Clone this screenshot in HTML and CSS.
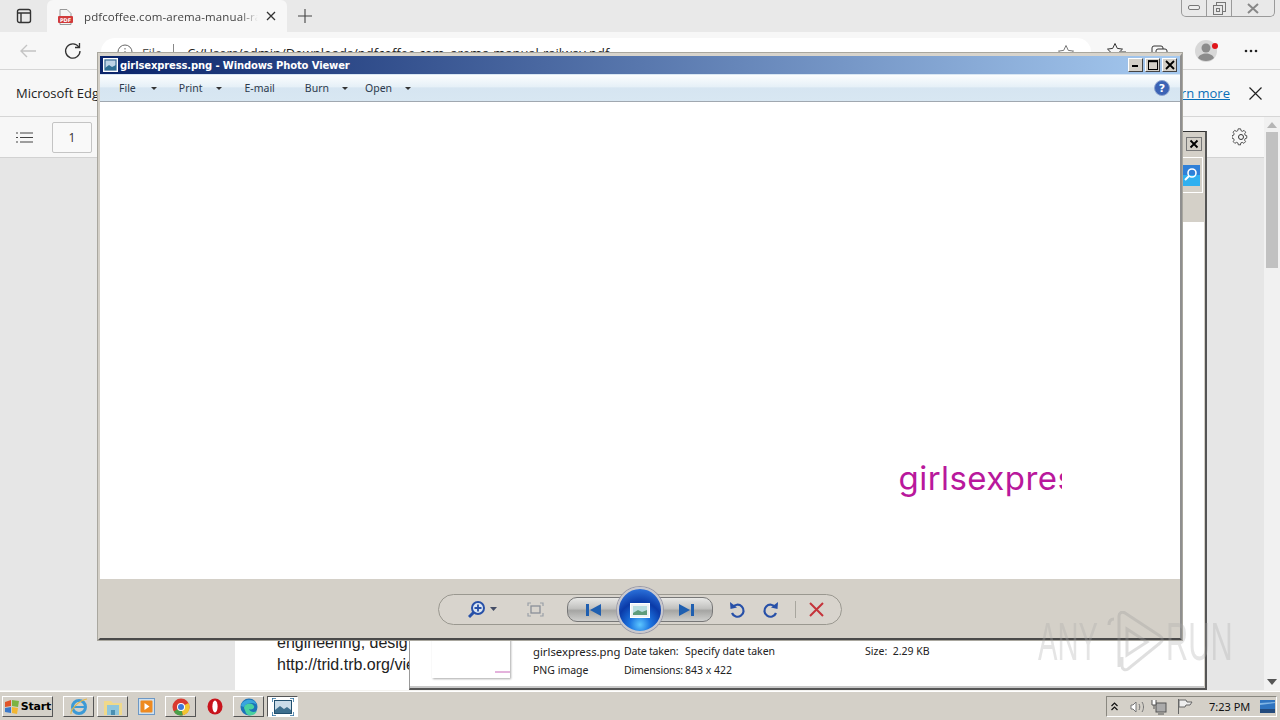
FILE: index.html
```html
<!DOCTYPE html>
<html lang="en">
<head>
<meta charset="utf-8">
<title>Windows Photo Viewer</title>
<link rel="stylesheet" href="styles.css">
</head>
<body>
<div class="desktop">
  <div class="browser">
    <div class="tabstrip">
      <svg class="tab-actions" width="16" height="16" viewBox="0 0 16 16"><rect x="1.5" y="1.5" width="13" height="13" rx="2" fill="none" stroke="#333" stroke-width="1.4"/><path d="M1.5 5h13M5 5v9.5" stroke="#333" stroke-width="1.4" fill="#666"/></svg>
      <div class="tab">
        <svg class="pdf-icon" width="15" height="16" viewBox="0 0 15 16"><path d="M2 .5h7l4 4v11H2z" fill="#f4f4f4" stroke="#999" stroke-width="1"/><rect x="0" y="7" width="15" height="7" rx="1" fill="#d13b3b"/><text x="7.5" y="12.6" text-anchor="middle" class="pdf-label">PDF</text></svg>
        <span class="tab-title">pdfcoffee.com-arema-manual-railway</span>
        <svg class="tab-close" width="10" height="10" viewBox="0 0 10 10"><path d="M1 1l8 8M9 1l-8 8" stroke="#333" stroke-width="1.3"/></svg>
      </div>
      <svg class="new-tab" width="16" height="16" viewBox="0 0 16 16"><path d="M8 1v14M1 8h14" stroke="#444" stroke-width="1.1"/></svg>
      <div class="caption">
        <span class="cap-btn"><svg width="12" height="6" viewBox="0 0 12 6"><rect x=".5" y=".5" width="11" height="4" rx="1.5" fill="#eee" stroke="#777"/></svg></span>
        <span class="cap-btn"><svg width="13" height="13" viewBox="0 0 13 13"><rect x="3.5" y=".5" width="9" height="9" fill="none" stroke="#777"/><rect x=".5" y="3.5" width="9" height="9" fill="#e8e8e8" stroke="#777"/><rect x="3.5" y="6.5" width="3" height="3" fill="none" stroke="#777"/></svg></span>
        <span class="cap-btn cap-wide"><svg width="12" height="11" viewBox="0 0 12 11"><path d="M1 1l10 9M11 1L1 10" stroke="#888" stroke-width="2"/></svg></span>
      </div>
    </div>
    <div class="toolbar">
      <svg class="nav-back" width="18" height="14" viewBox="0 0 18 14"><path d="M17 7H2M8 1L2 7l6 6" fill="none" stroke="#c4c4c4" stroke-width="1.4"/></svg>
      <svg class="nav-reload" width="18" height="18" viewBox="0 0 18 18"><path d="M14.8 5A7.2 7.2 0 1 0 16 9" fill="none" stroke="#333" stroke-width="1.3"/><path d="M15.5 1v4.5H11" fill="none" stroke="#333" stroke-width="1.3"/></svg>
      <div class="address">
        <svg class="info" width="16" height="16" viewBox="0 0 16 16"><circle cx="8" cy="8" r="7" fill="none" stroke="#666"/><path d="M8 7v5M8 4v1.5" stroke="#666"/></svg>
        <span class="addr-file">File</span>
        <span class="addr-sep"></span>
        <span class="addr-url">C:/Users/admin/Downloads/pdfcoffee.com_arema-manual-railway.pdf</span>
        <svg class="addr-star" width="18" height="18" viewBox="0 0 18 18"><path d="M9 1.5l2.3 4.9 5.2.7-3.8 3.7.9 5.3L9 13.5l-4.6 2.6.9-5.3L1.500 7.100l5.200-.7z" fill="none" stroke="#777"/></svg>
      </div>
      <svg class="tool-fav" width="20" height="18" viewBox="0 0 20 18"><path d="M8 1.500l2.300 4.900 5.200.7-3.800 3.700.9 5.300L8 13.500l-4.600 2.600.9-5.300L.500 7.100l5.200-.7zM14 10h5M14 13h5" fill="none" stroke="#333"/></svg>
      <svg class="tool-coll" width="18" height="18" viewBox="0 0 18 18"><rect x="1" y="3" width="11" height="11" rx="2" fill="none" stroke="#333"/><rect x="5" y="6" width="11" height="11" rx="2" fill="#f7f7f7" stroke="#333"/></svg>
      <svg class="tool-avatar" width="24" height="24" viewBox="0 0 24 24"><circle cx="11" cy="12" r="11" fill="#d8d8d8"/><circle cx="11" cy="9" r="4.500" fill="#8c8c8c"/><path d="M3 19c2-6 14-6 16 0-4 4-12 4-16 0z" fill="#8c8c8c"/><circle cx="20" cy="7" r="3" fill="#e0161b"/></svg>
      <svg class="tool-more" width="14" height="4" viewBox="0 0 14 4"><circle cx="2" cy="2" r="1.300" fill="#222"/><circle cx="7" cy="2" r="1.300" fill="#222"/><circle cx="12" cy="2" r="1.300" fill="#222"/></svg>
    </div>
    <div class="infobar">
      <span class="info-text">Microsoft Edge</span>
      <a class="learn">Learn more</a>
      <svg class="info-close" width="13" height="13" viewBox="0 0 13 13"><path d="M.5.500l12 12M12.500.500l-12 12" stroke="#222" stroke-width="1.200"/></svg>
    </div>
    <div class="lower">
      <div class="pdf">
        <div class="pdf-bar">
          <svg class="toc" width="17" height="11" viewBox="0 0 17 11"><path d="M4 1h13M4 5.500h13M4 10h13M0 1h2M0 5.500h2M0 10h2" stroke="#444" stroke-width="1.100"/></svg>
          <span class="page-box">1</span>
          <svg class="gear" width="18" height="18" viewBox="0 0 18 18"><path d="M7.500 1h3l.5 2.300 1.700.8 2-1.200 2 2.200-1.300 2 .6 1.700 2 .6v3l-2 .6-.7 1.700 1.200 2-2 2-2-1.200-1.700.7-.5 2.300" transform="scale(.82)" fill="none" stroke="#333"/><path d="M7.500 1 7 3.300l-1.700.8-2-1.200-2 2.200 1.300 2-.6 1.700-2 .6v3l2 .6.700 1.700-1.200 2 2 2 2-1.200 1.700.7.500 2.300h3" transform="scale(.82)" fill="none" stroke="#333"/><circle cx="9" cy="9" r="2.500" fill="none" stroke="#333"/></svg>
        </div>
        <div class="viewer">
          <div class="pdf-page">
            <p class="pdf-line">engineering, desig</p>
            <p class="pdf-line">http://trid.trb.org/vie</p>
          </div>
        </div>
      </div>
      <div class="scrollbar">
        <svg width="10" height="6" viewBox="0 0 10 6"><path d="M5 0l5 6H0z" fill="#b5b5b5"/></svg>
        <div class="thumb"></div>
        <svg class="scroll-down" width="10" height="6" viewBox="0 0 10 6"><path d="M5 6l5-6H0z" fill="#555"/></svg>
      </div>
    </div>
  </div>
  <div class="taskbar">
    <button class="task-btn start">
      <svg width="16" height="15" viewBox="0 0 16 15"><path d="M1 3l6-2v6l-6 1z" fill="#e0552a"/><path d="M8 1l7 1-1 6-6-1z" fill="#7cb342"/><path d="M1 9l6-1v6l-6-1z" fill="#3a78c9"/><path d="M8 8l6 1-1 6-5-1z" fill="#f2b632"/></svg>
      <span>Start</span>
    </button>
    <button class="task-btn first">
      <svg width="20" height="20" viewBox="0 0 20 20"><circle cx="10" cy="10" r="6.500" fill="none" stroke="#3d9ad6" stroke-width="3"/><path d="M5 10h11" stroke="#3d9ad6" stroke-width="2"/><path d="M2 17C1 13 10 3 18 2" fill="none" stroke="#e3b64a" stroke-width="1.200"/></svg>
    </button>
    <button class="task-btn">
      <svg width="20" height="18" viewBox="0 0 20 18"><path d="M1 3h7l2 2h9v12H1z" fill="#f0d98a"/><rect x="4" y="7" width="12" height="10" fill="#8fc6dc"/><rect x="8" y="12" width="4" height="5" fill="#4a8fb2"/></svg>
    </button>
    <span class="task-flat media">
      <svg width="17" height="17" viewBox="0 0 17 17"><rect x=".5" y=".5" width="16" height="16" fill="#cfe0ee" stroke="#6d98c5"/><rect x="2.500" y="2.500" width="12" height="12" rx="1" fill="#ee8a20"/><path d="M6.500 5l5 3.500-5 3.500z" fill="#fff"/></svg>
    </span>
    <button class="task-btn">
      <svg width="18" height="18" viewBox="0 0 18 18"><circle cx="9" cy="9" r="8.500" fill="#d93a30"/><path d="M9 9L1.800 13.500A8.500 8.500 0 0 0 11 17.300z" fill="#4aa04a"/><path d="M9 9l2 8.300A8.500 8.500 0 0 0 16.500 4.900z" fill="#f2c530"/><circle cx="9" cy="9" r="4" fill="#fff"/><circle cx="9" cy="9" r="3" fill="#3f78d8"/></svg>
    </button>
    <span class="task-flat opera">
      <svg width="16" height="17" viewBox="0 0 16 17"><ellipse cx="8" cy="8.500" rx="7.500" ry="8" fill="#c8141c"/><ellipse cx="8" cy="8.500" rx="2.600" ry="6" fill="#fff"/></svg>
    </span>
    <button class="task-btn">
      <svg width="18" height="18" viewBox="0 0 18 18"><circle cx="9" cy="9" r="8.500" fill="#1c73b8"/><path d="M4 10c0-5 8-6 10-2 1 3-3 4-5 3 1 3 5 4 8 2-2 5-9 6-11 2z" fill="#48d0a0"/><path d="M1 8c1-7 13-9 16-1-3-3-11-3-13 2z" fill="#39a5dd"/></svg>
    </button>
    <span class="task-pressed">
      <svg width="22" height="18" viewBox="0 0 22 18"><rect x="2.500" y="2.500" width="17" height="13" fill="#c9dbe8" stroke="#22506f" stroke-width="1"/><path d="M3 12l5-4 4 3 3-2 4 3v3H3z" fill="#3e6f8e"/><path d="M0 4V0h4M18 0h4v4M22 14v4h-4M4 18H0v-4" fill="none" stroke="#2d6f9e" stroke-width="1.500"/></svg>
    </span>
    <div class="tray">
      <svg width="7" height="9" viewBox="0 0 7 9"><path d="M.5 4l3-3 3 3M.5 8l3-3 3 3" fill="none" stroke="#111" stroke-width="1.200"/></svg>
      <svg class="tray-sound" width="16" height="14" viewBox="0 0 16 14"><path d="M1 5h2l3-3v10l-3-3H1z" fill="#fff" stroke="#777"/><path d="M9 4c1 2 1 4 0 6M12 2c2 3 2 7 0 10" fill="none" stroke="#777"/></svg>
      <svg class="tray-net" width="16" height="16" viewBox="0 0 16 16"><rect x="5" y="4" width="10" height="9" fill="#aaa" stroke="#555"/><path d="M1 1v5h4V1M3 6v4" fill="#fff" stroke="#555"/><path d="M7 15h6" stroke="#555"/></svg>
      <svg class="tray-flag" width="16" height="15" viewBox="0 0 16 15"><path d="M1.500 0v15M2 1h7l1 2h5l-2 3 0 0H9L8 8H2z" fill="#eee" stroke="#666"/></svg>
      <span class="clock">7:23 PM</span>
      <svg class="tray-desk" width="15" height="13" viewBox="0 0 15 13"><rect width="15" height="13" fill="#2f74c0"/><rect y="9" width="15" height="4" fill="#234a7d"/><path d="M0 3l15-1v1L0 5z" fill="#7fb4e4"/></svg>
    </div>
  </div>

  <div class="window back-window">
    <div class="back-top">
      <svg class="back-close" width="16" height="14" viewBox="0 0 16 14"><rect x=".5" y=".5" width="15" height="13" fill="#d4d0c8" stroke="#777"/><path d="M4.500 3.500l7 7M11.500 3.500l-7 7" stroke="#000" stroke-width="1.800"/></svg>
      <div class="back-search">
        <svg width="18" height="21" viewBox="0 0 18 21"><rect width="18" height="21" fill="#2f80d8"/><rect y="10" width="18" height="11" fill="#2fb0f0"/><circle cx="10" cy="8" r="4" fill="none" stroke="#fff" stroke-width="1.600"/><path d="M7 11l-4 4" stroke="#fff" stroke-width="2"/></svg>
      </div>
      <svg class="back-help" width="18" height="18" viewBox="0 0 18 18"><circle cx="3" cy="9" r="7" fill="#3a5fb0" stroke="#97a6c9"/></svg>
    </div>
    <div class="back-white">
      <div class="details">
        <div class="thumbnail"><span class="thumb-mark"></span></div>
        <div class="meta-col name-col"><span class="name-text">girlsexpress.png</span><span>PNG image</span></div>
        <div class="meta-col"><span><span class="meta-label">Date taken:</span>Specify date taken</span><span><span class="meta-label">Dimensions:</span>843 x 422</span></div>
        <div class="meta-col size-col"><span>Size:&nbsp; 2.29 KB</span></div>
      </div>
    </div>
  </div>

  <div class="window photo-window">
    <div class="titlebar">
      <svg width="15" height="14" viewBox="0 0 15 14"><rect x=".5" y=".5" width="14" height="13" fill="#d7e6f2" stroke="#fff"/><rect x="2" y="2" width="11" height="10" fill="#bcd3e6" stroke="#2b5f88"/><path d="M2 10l4-3 3 2 4-2v5H2z" fill="#2f6f94"/></svg>
      <span class="title-text">girlsexpress.png - Windows Photo Viewer</span>
      <div class="win-buttons">
        <span class="win-btn"><svg width="8" height="3" viewBox="0 0 8 3"><rect width="6" height="2" y="1" fill="#000"/></svg></span>
        <span class="win-btn"><svg width="10" height="10" viewBox="0 0 10 10"><rect x=".5" y="1" width="9" height="8.500" fill="none" stroke="#000"/><path d="M0 1.200h10" stroke="#000" stroke-width="2"/></svg></span>
        <span class="win-btn win-close"><svg width="10" height="10" viewBox="0 0 10 10"><path d="M1 1l8 8M9 1L1 9" stroke="#000" stroke-width="1.800"/></svg></span>
      </div>
    </div>
    <div class="menubar">
      <span class="menu m-file">File</span><i class="caret c-file"></i>
      <span class="menu m-print">Print</span><i class="caret c-print"></i>
      <span class="menu m-email">E-mail</span>
      <span class="menu m-burn">Burn</span><i class="caret c-burn"></i>
      <span class="menu m-open">Open</span><i class="caret c-open"></i>
      <svg class="help" width="16" height="16" viewBox="0 0 16 16"><circle cx="8" cy="8" r="7.500" fill="#3c63b5" stroke="#8ea4cf"/><text x="8" y="12" text-anchor="middle" class="help-q">?</text></svg>
    </div>
    <div class="stage">
      <div class="picture"><span class="picture-text">girlsexpress</span></div>
    </div>
    <div class="controls">
      <div class="pill">
        <svg class="c-zoom" width="30" height="20" viewBox="0 0 30 20"><circle cx="10" cy="8" r="6" fill="#dbe6f3" stroke="#2750a8" stroke-width="2"/><path d="M6.500 8h7M10 4.500v7" stroke="#2750a8" stroke-width="1.800"/><path d="M5.500 12.500L1 17" stroke="#2750a8" stroke-width="3"/><path d="M22 7h7l-3.500 4z" fill="#444d66"/></svg>
        <svg class="c-fit" width="17" height="15" viewBox="0 0 17 15"><rect x="4" y="4" width="9" height="7" fill="none" stroke="#8a9098" stroke-width="1.300"/><path d="M1 4V1h3M13 1h3v3M16 11v3h-3M4 14H1v-3" fill="none" stroke="#9aa0a8" stroke-width="1.200"/></svg>
        <div class="nav-group">
          <svg class="nav-first" width="15" height="12" viewBox="0 0 15 12"><rect width="3" height="12" fill="#1f5fb0"/><path d="M15 0v12L4 6z" fill="#1f5fb0"/></svg>
          <span class="slideshow">
            <svg width="20" height="15" viewBox="0 0 20 15"><rect x=".5" y=".5" width="19" height="14" fill="#eef2f6" stroke="#fff"/><rect x="3" y="3" width="14" height="9" fill="#b8dce0"/><path d="M3 10l5-3 4 2 5-2v5H3z" fill="#5f9c7c"/></svg>
          </span>
          <svg class="nav-last" width="15" height="12" viewBox="0 0 15 12"><path d="M0 0v12l11-6z" fill="#1f5fb0"/><rect x="12" width="3" height="12" fill="#1f5fb0"/></svg>
        </div>
        <svg class="c-rot-l" width="16" height="18" viewBox="0 0 16 18"><path d="M3.500 6.500A6 6 0 1 1 3 12" fill="none" stroke="#2750a8" stroke-width="2.200"/><path d="M1 1l.5 7 6.500-1.500z" fill="#2750a8"/></svg>
        <svg class="c-rot-r" width="16" height="18" viewBox="0 0 16 18"><path d="M12.500 6.500A6 6 0 1 0 13 12" fill="none" stroke="#2750a8" stroke-width="2.200"/><path d="M15 1l-.5 7L8 6.500z" fill="#2750a8"/></svg>
        <span class="c-sep"></span>
        <svg class="c-del" width="15" height="15" viewBox="0 0 15 15"><path d="M1 1l13 13M14 1L1 14" stroke="#c5333a" stroke-width="2"/></svg>
      </div>
    </div>
  </div>

  <div class="watermark">
    <span class="wm-any">ANY</span>
    <svg class="wm-logo" width="58" height="62" viewBox="0 0 58 62"><path d="M3 14c0-4 2-6 5-6M13 56L13 5c0-3 3-5 6-3l35 23c3 2 3 5 0 7L22 58c-3 2-6 0-6-3V46M21 18v26l20-13z" fill="none" stroke="#999" stroke-width="3"/></svg>
    <span class="wm-run">RUN</span>
  </div>
</div>
</body>
</html>
```
FILE: styles.css
```css
* { box-sizing: border-box; }
html, body { margin: 0; padding: 0; height: 100%; overflow: hidden; }
body { font-family: "Open Sans", "Noto Sans", sans-serif; background: #e6e6e6; }
svg { display: block; flex: none; }
.desktop { position: relative; width: 1280px; height: 720px; display: flex; flex-direction: column; overflow: hidden; }

/* browser */
.browser { height: 691px; display: flex; flex-direction: column; border-bottom: 1px solid #f4f3f0; }
.tabstrip { height: 32px; background: #e9e9e9; display: flex; align-items: center; padding-left: 16px; }
.tab { margin-left: 15px; width: 240px; height: 32px; background: #f7f7f7; border-radius: 6px 6px 0 0; display: flex; align-items: center; padding: 0 11px 0 11px; }
.pdf-icon { margin-top: 1px; }
.pdf-label { font-family: "DejaVu Sans", sans-serif; font-weight: bold; font-size: 5px; fill: #fff; }
.tab-title { margin-left: 11px; width: 174px; font-size: 11.500px; color: #444; white-space: nowrap; overflow: hidden; letter-spacing: .1px; -webkit-mask-image: linear-gradient(to right, #000 90%, transparent); mask-image: linear-gradient(to right, #000 90%, transparent); }
.tab-close { margin-left: 8px; }
.new-tab { margin-left: 10px; }
.caption { margin-left: auto; margin-right: 5px; align-self: flex-start; height: 17px; display: flex; border: 1px solid #9a9a9a; border-top: 0; border-radius: 0 0 5px 5px; }
.cap-btn { width: 25px; display: flex; align-items: center; justify-content: center; border-right: 1px solid #9a9a9a; }
.cap-wide { width: 42px; border-right: 0; }
.toolbar { height: 38px; background: #f7f7f7; border-bottom: 1px solid #d6d6d6; display: flex; align-items: center; padding-left: 19px; }
.nav-reload { margin-left: 27px; }
.address { margin-left: 19px; width: 990px; height: 32px; margin-top: 6px; background: #fff; border-radius: 14px 14px 0 0; display: flex; align-items: flex-start; padding: 6px 16px 0 16px; position: relative; }
.addr-file { margin-left: 9px; font-size: 12.800px; color: #555; line-height: 18px; }
.addr-sep { margin-left: 11px; width: 1px; height: 17px; background: #888; }
.addr-url { margin-left: 13px; font-size: 12.950px; color: #222; line-height: 18px; white-space: nowrap; }
.addr-star { margin-left: auto; }
.tool-fav { margin-left: 16px; }
.tool-coll { margin-left: 24px; margin-top: 2px; }
.tool-avatar { margin-left: 26px; }
.tool-more { margin-left: 25px; }
.infobar { height: 47px; background: #f7f7f7; border-bottom: 1px solid #d6d6d6; display: flex; align-items: center; padding: 0 18px 0 16px; }
.info-text { font-size: 13px; color: #222; }
.learn { margin-left: auto; font-size: 13px; color: #0b6fb8; text-decoration: underline; }
.info-close { margin-left: 19px; }
.lower { flex: 1; display: flex; min-height: 0; }
.pdf { flex: 1; display: flex; flex-direction: column; }
.pdf-bar { height: 41px; background: #f7f7f7; border-bottom: 1px solid #d2d2d2; display: flex; align-items: center; padding-left: 16px; }
.page-box { margin-left: 19px; width: 40px; height: 31px; background: #f9f9f9; border: 1px solid #c4c4c4; border-radius: 2px; font-size: 12px; color: #333; display: flex; align-items: center; justify-content: center; }
.gear { margin-left: auto; margin-right: 14px; }
.viewer { flex: 1; background: #e6e6e6; padding-left: 235px; overflow: hidden; display: flex; }
.pdf-page { width: 800px; background: #fff; padding: 474px 0 0 42px; font-family: "Liberation Sans", Arial, sans-serif; font-size: 16px; color: #222; }
.pdf-line { margin: 0 0 1px; line-height: 21px; white-space: nowrap; }
.scrollbar { width: 16px; background: #f1f1f1; display: flex; flex-direction: column; align-items: center; padding-top: 5px; }
.thumb { width: 12px; height: 136px; margin-top: 4px; background: #c1c1c1; }
.scroll-down { margin-top: auto; margin-bottom: 5px; }

/* taskbar */
.taskbar { height: 29px; background: #d4d0c8; border-top: 1px solid #fff; display: flex; align-items: flex-start; padding: 4px 3px 0 2px; }
.task-btn { width: 31px; height: 21px; margin: 0 3px 0 0; padding: 0; background: #d4d0c8; border: 1px solid; border-color: #fff #555 #555 #fff; display: flex; align-items: center; justify-content: center; font-family: "DejaVu Sans", sans-serif; }
.start { width: 51px; font-weight: bold; font-size: 11px; color: #000; gap: 1px; margin-right: 10px; letter-spacing: -.2px; }
.task-flat { height: 21px; display: flex; align-items: center; justify-content: center; }
.media { width: 27px; margin: 0 5px 0 2px; }
.opera { width: 31px; margin-right: 3px; }
.task-pressed { width: 31px; height: 21px; background: #fff; border: 1px solid; border-color: #555 #fff #fff #555; display: flex; align-items: center; justify-content: center; }
.tray { margin-left: auto; width: 171px; height: 21px; border: 1px solid; border-color: #8a8880 #fff #fff #8a8880; display: flex; align-items: center; padding-left: 4px; }
.tray-sound { margin-left: 12px; }
.tray-net { margin-left: 5px; }
.tray-flag { margin-left: 10px; }
.clock { margin-left: 16px; font-family: "Noto Sans", sans-serif; font-size: 11px; color: #111; }
.tray-desk { margin-left: auto; margin-right: 1px; }

/* windows: free-floating on the desktop */
.window { position: absolute; }
.back-window { left: 409px; top: 131px; width: 798px; height: 559px; background: #d4d0c8; border-right: 2px solid #555; border-bottom: 2px solid #555; border-left: 1px solid #999; border-top: 1px solid #333; display: flex; flex-direction: column; }
.back-top { height: 90px; position: relative; }
.back-close { position: absolute; right: 3px; top: 5px; }
.back-search { position: absolute; right: 2px; top: 25px; height: 36px; width: 794px; border: 1px solid #fff; border-left: 0; display: flex; justify-content: flex-end; align-items: center; padding-right: 2px; }
.back-help { position: absolute; right: 18px; top: 66px; }
.back-white { flex: 1; background: #fff; margin-right: 1px; display: flex; flex-direction: column; justify-content: flex-end; border-bottom: 2px solid #c8c8c8; }
.details { height: 50px; padding-top: 2px; display: flex; align-items: flex-start; font-size: 10.500px; color: #222; padding-left: 22px; font-family: "Noto Sans", sans-serif; }
.thumbnail { width: 78px; height: 40px; background: #fff; box-shadow: 1px 1px 2px #aaa; position: relative; }
.thumb-mark { position: absolute; right: 0; top: 33px; width: 15px; height: 2px; background: #e4b2dc; }
.meta-col { display: flex; flex-direction: column; gap: 2px; line-height: 17px; padding-top: 5px; white-space: nowrap; }
.meta-label { display: inline-block; width: 61px; letter-spacing: -.2px; }
.name-col { margin-left: 23px; width: 91px; }
.name-text { font-size: 11.300px; }
.size-col { margin-left: 90px; }

.photo-window { left: 97px; top: 52px; width: 1086px; height: 589px; background: #d4d0c8; border: 3px solid #d4d0c8; border-right-color: #8f8f8f; border-bottom-color: #4a4a4a; border-top: 4px solid #d8d4cc; outline: 1px solid #a9a79f; outline-offset: -1px; display: flex; flex-direction: column; }
.titlebar { height: 18px; background: linear-gradient(to right, #0a246a, #a6caf0); display: flex; align-items: center; padding-left: 3px; }
.title-text { margin-left: 2px; font-family: "DejaVu Sans", sans-serif; font-weight: bold; font-size: 10px; color: #fff; white-space: nowrap; letter-spacing: -.13px; }
.win-buttons { margin-left: auto; display: flex; margin-right: 3px; gap: 2px; }
.win-btn { width: 15px; height: 14px; background: #d4d0c8; border: 1px solid; border-color: #fff #444 #444 #fff; display: flex; align-items: center; justify-content: center; }
.menubar { height: 28px; border-top: 1px solid #d8e6f2; border-bottom: 1px solid #a0a8b0; background: linear-gradient(to bottom, #fbfdfe 0, #e6f0f7 45%, #d6e5f1 50%, #d8e7f2 100%); display: flex; align-items: center; padding-left: 19px; position: relative; }
.menu { font-family: "Noto Sans", sans-serif; font-size: 10.500px; color: #2c3a4c; }
.caret { width: 0; height: 0; border: 3px solid transparent; border-top: 3px solid #333; border-bottom: 0; }
.c-file { margin-left: 15px; }
.m-print { margin-left: 22px; }
.c-print { margin-left: 14px; }
.m-email { margin-left: 22px; }
.m-burn { margin-left: 30px; }
.c-burn { margin-left: 13px; }
.m-open { margin-left: 17px; }
.c-open { margin-left: 13px; }
.help { margin-left: auto; margin-right: 10px; }
.help-q { font-family: "DejaVu Sans", sans-serif; font-weight: bold; font-size: 11px; fill: #fff; }
.stage { height: 477px; background: #fff; display: flex; align-items: center; justify-content: center; }
.picture { width: 843px; height: 422px; overflow: hidden; padding: 326px 0 0 680px; white-space: nowrap; font-family: "Inter", "Noto Sans", sans-serif; font-size: 33px; letter-spacing: .45px; line-height: 44px; color: #b9189c; }
.controls { flex: 1; display: flex; justify-content: center; align-items: center; padding-top: 2px; }
.pill { width: 404px; height: 31px; border: 1px solid #9a9890; border-radius: 16px; background: #d8d4cd; display: flex; align-items: center; padding-left: 29px; }
.c-fit { margin-left: 29px; }
.nav-group { margin-left: 23px; width: 146px; height: 25px; border-radius: 10px; border: 1px solid #777; background: linear-gradient(to bottom, #e8e8e6 0, #c2c2c0 45%, #a5a5a3 55%, #cfcfcd 100%); display: flex; align-items: center; padding: 0 18px; justify-content: space-between; position: relative; }
.slideshow { position: absolute; left: 49px; top: -11px; width: 46px; height: 46px; border-radius: 50%; background: radial-gradient(circle at 50% 85%, #5cc6ff 0, #1c74e0 25%, #0a3aa8 55%, #2a6fd8 85%, #8ab8ea 100%); border: 2px solid #c9c9cf; box-shadow: 0 0 0 1px #9a9aa8; display: flex; align-items: center; justify-content: center; }
.c-rot-l { margin-left: 16px; }
.c-rot-r { margin-left: 18px; }
.c-sep { margin-left: 16px; width: 1px; height: 17px; background: #a8a69e; }
.c-del { margin-left: 13px; }

.watermark { position: absolute; left: 1038px; top: 611px; display: flex; align-items: center; opacity: .3; font-family: "Liberation Sans", sans-serif; font-size: 53px; line-height: 62px; color: #aaa; }
.watermark span { display: block; transform-origin: left center; transform: scaleX(.55); white-space: nowrap; }
.watermark .wm-run { transform: scaleX(.58); }
.wm-any { width: 68px; }
.wm-logo { width: 58px; }
.wm-run { width: 66px; margin-left: 2px; }
```
